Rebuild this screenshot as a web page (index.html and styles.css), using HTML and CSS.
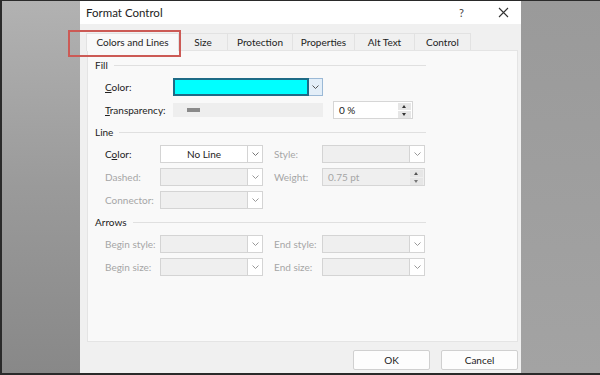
FILE: index.html
```html
<!DOCTYPE html>
<html>
<head>
<meta charset="utf-8">
<link rel="stylesheet" href="styles.css">
</head>
<body>
<div class="screen">
  <div class="bg-left"></div>
  <div class="dialog">
    <div class="titlebar">
      <span class="title">Format Control</span>
      <span class="help">?</span>
      <svg class="close" width="11" height="11" viewBox="0 0 11 11"><path d="M1 1L10 10M10 1L1 10" stroke="#333" stroke-width="1.1" fill="none"/></svg>
    </div>
    <div class="body">
      <div class="tabs">
        <div class="tab active">Colors and Lines</div>
        <div class="tab t-size">Size</div>
        <div class="tab t-prot">Protection</div>
        <div class="tab t-prop">Properties</div>
        <div class="tab t-alt">Alt Text</div>
        <div class="tab t-ctrl">Control</div>
        <div class="highlight"></div>
      </div>
      <div class="panel">
        <div class="section">
          <div class="sec-head"><span>Fill</span><i></i></div>
          <div class="row fill-row">
            <span class="lbl"><u>C</u>olor:</span>
            <div class="colorpick"><div class="swatch"></div><div class="cbtn"><svg width="7" height="4" viewBox="0 0 7 4"><path d="M0.5 0.5L3.5 3.5L6.5 0.5" stroke="#555" fill="none"/></svg></div></div>
          </div>
          <div class="row fill-row">
            <span class="lbl"><u>T</u>ransparency:</span>
            <div class="slider"><div class="thumb"></div></div>
            <div class="spin pct"><span>0 %</span><div class="spinbtns"><b class="up"></b><b class="dn"></b></div></div>
          </div>
        </div>
        <div class="section">
          <div class="sec-head"><span>Line</span><i></i></div>
          <div class="row grid-row">
            <span class="lbl">C<u>o</u>lor:</span>
            <div class="select on"><span class="val center">No Line</span><div class="arr"><svg width="7" height="4" viewBox="0 0 7 4"><path d="M0.5 0.5L3.5 3.5L6.5 0.5" stroke="#777" fill="none"/></svg></div></div>
            <span class="lbl dis">Style:</span>
            <div class="select"><span class="val"></span><div class="arr"><svg width="7" height="4" viewBox="0 0 7 4"><path d="M0.5 0.5L3.5 3.5L6.5 0.5" stroke="#999" fill="none"/></svg></div></div>
          </div>
          <div class="row grid-row">
            <span class="lbl dis">Dashed:</span>
            <div class="select"><span class="val"></span><div class="arr"><svg width="7" height="4" viewBox="0 0 7 4"><path d="M0.5 0.5L3.5 3.5L6.5 0.5" stroke="#999" fill="none"/></svg></div></div>
            <span class="lbl dis">Weight:</span>
            <div class="spin weight"><span>0.75 pt</span><div class="spinbtns"><b class="up"></b><b class="dn"></b></div></div>
          </div>
          <div class="row grid-row">
            <span class="lbl dis">Connector:</span>
            <div class="select"><span class="val"></span><div class="arr"><svg width="7" height="4" viewBox="0 0 7 4"><path d="M0.5 0.5L3.5 3.5L6.5 0.5" stroke="#999" fill="none"/></svg></div></div>
          </div>
        </div>
        <div class="section">
          <div class="sec-head"><span>Arrows</span><i></i></div>
          <div class="row grid-row">
            <span class="lbl dis">Begin style:</span>
            <div class="select"><span class="val"></span><div class="arr"><svg width="7" height="4" viewBox="0 0 7 4"><path d="M0.5 0.5L3.5 3.5L6.5 0.5" stroke="#999" fill="none"/></svg></div></div>
            <span class="lbl dis">End style:</span>
            <div class="select"><span class="val"></span><div class="arr"><svg width="7" height="4" viewBox="0 0 7 4"><path d="M0.5 0.5L3.5 3.5L6.5 0.5" stroke="#999" fill="none"/></svg></div></div>
          </div>
          <div class="row grid-row">
            <span class="lbl dis">Begin size:</span>
            <div class="select"><span class="val"></span><div class="arr"><svg width="7" height="4" viewBox="0 0 7 4"><path d="M0.5 0.5L3.5 3.5L6.5 0.5" stroke="#999" fill="none"/></svg></div></div>
            <span class="lbl dis">End size:</span>
            <div class="select"><span class="val"></span><div class="arr"><svg width="7" height="4" viewBox="0 0 7 4"><path d="M0.5 0.5L3.5 3.5L6.5 0.5" stroke="#999" fill="none"/></svg></div></div>
          </div>
        </div>
      </div>
      <div class="footer">
        <div class="btn">OK</div>
        <div class="btn">Cancel</div>
      </div>
    </div>
  </div>
  <div class="bg-right"></div>
</div>
</body>
</html>
```
FILE: styles.css
```css
html, body { margin: 0; padding: 0; }
body {
  width: 600px; height: 375px; overflow: hidden;
  font-family: Lato, "Open Sans", sans-serif;
  font-size: 10px; color: #222;
  background: #2a2a2a;
}
.screen {
  display: flex;
  height: 372px;
  margin: 1px 0 2px 2px;
}
.bg-left {
  width: 78px;
  background: linear-gradient(180deg, #b2b2b2 0%, #9a9a9a 50%, #888 100%);
}
.bg-right {
  flex: 1;
  background: linear-gradient(180deg, #9a9a9a 0%, #a3a3a3 100%);
}
.dialog {
  width: 441px;
  display: flex; flex-direction: column;
  background: #f0f0f0;
}
.titlebar {
  height: 23px; background: #fff;
  display: flex; align-items: center;
  padding-left: 6px;
}
.title { font-size: 11.5px; color: #222; flex: 1; }
.help { font-size: 11px; color: #444; margin-right: 34px; }
.close { margin-right: 12px; }
.body { flex: 1; display: flex; flex-direction: column; }
.tabs {
  position: relative;
  display: flex; margin: 9px 0 0 6px; height: 17px;
}
.tab {
  height: 16px; line-height: 16px; white-space: nowrap;
  text-align: center; color: #222;
  border: 1px solid #e2e2e2; border-bottom: none;
  background: #f0f0f0;
  margin-right: -1px;
}
.tab.active { width: 91px; background: #f9f9f9; height: 17px; }
.t-size { width: 48px; }
.t-prot { width: 64px; }
.t-prop { width: 61px; }
.t-alt { width: 59px; }
.t-ctrl { width: 55px; }
.highlight {
  position: absolute; left: -18px; top: -3px;
  width: 109px; height: 23px;
  border: 2px solid #cc5a55;
}
.panel {
  margin: 0 3px 0 7px; height: 292px;
  background: #f9f9f9;
  border: 1px solid #e4e4e4;
  padding: 6px 0 0 7px;
  box-sizing: border-box;
}
.section { display: flex; flex-direction: column; gap: 5px; margin-bottom: 5px; }
.sec-head { height: 16px; display: flex; align-items: center; width: 331px; }
.sec-head span { color: #222; margin-right: 6px; }
.sec-head i { flex: 1; border-top: 1px solid #e0e0e0; }
.row { height: 18px; display: flex; align-items: center; padding-left: 10px; white-space: nowrap; }
.fill-row .lbl { width: 68px; }
.lbl { color: #222; }
.lbl.dis { color: #a6a6a6; }
.grid-row { display: grid; grid-template-columns: 55px 103px 59px 103px; align-items: center; }
.grid-row .lbl:nth-child(3) { padding-left: 11px; }
.colorpick { display: flex; width: 150px; height: 18px; }
.swatch {
  flex: 1; background: #00ffff;
  border: 2px solid #1d6b86; box-sizing: border-box;
}
.cbtn {
  width: 14px; background: #e3eef8; border: 1px solid #9bb9d6;
  border-left: none; box-sizing: border-box;
  display: flex; align-items: center; justify-content: center;
}
.slider {
  width: 150px; height: 14px; background: #eeeeee;
  display: flex; align-items: center; padding-left: 14px;
  box-sizing: border-box;
}
.thumb { width: 13px; height: 4px; background: #8a8a8a; }
.spin {
  display: flex; height: 18px; box-sizing: border-box;
  border: 1px solid #d6d6d6; align-items: center;
}
.pct { width: 80px; background: #fff; margin-left: 10px; }
.weight { width: 103px; background: #efefef; }
.weight span { color: #a6a6a6; }
.spin span { flex: 1; padding-left: 5px; }
.spinbtns { width: 13px; display: flex; flex-direction: column; gap: 1px; margin-right: 1px; }
.spinbtns b {
  height: 7px; background: #e6e6e6; position: relative; display: block;
}
.spinbtns b::after {
  content: ""; position: absolute; left: 4px; top: 2px;
  border-left: 2.5px solid transparent; border-right: 2.5px solid transparent;
}
.spinbtns b.up::after { border-bottom: 3px solid #333; }
.spinbtns b.dn::after { border-top: 3px solid #333; }
.weight .spinbtns b.up::after { border-bottom-color: #555; }
.weight .spinbtns b.dn::after { border-top-color: #777; }
.select {
  display: flex; height: 18px; box-sizing: border-box;
  border: 1px solid #d4d4d4; background: #efefef;
}
.select.on { background: #fff; }
.val { flex: 1; line-height: 16px; }
.val.center { text-align: center; color: #222; }
.arr {
  width: 14px; background: #fff; border-left: 1px solid #d4d4d4;
  display: flex; align-items: center; justify-content: center;
}
.footer {
  display: flex; justify-content: flex-end; gap: 11px;
  padding: 8px 3px 0 0;
}
.btn {
  width: 77px; height: 20px; box-sizing: border-box;
  border: 1px solid #d0d0d0; background: #fdfdfd; border-radius: 2px;
  text-align: center; line-height: 18px; color: #222;
}
```
